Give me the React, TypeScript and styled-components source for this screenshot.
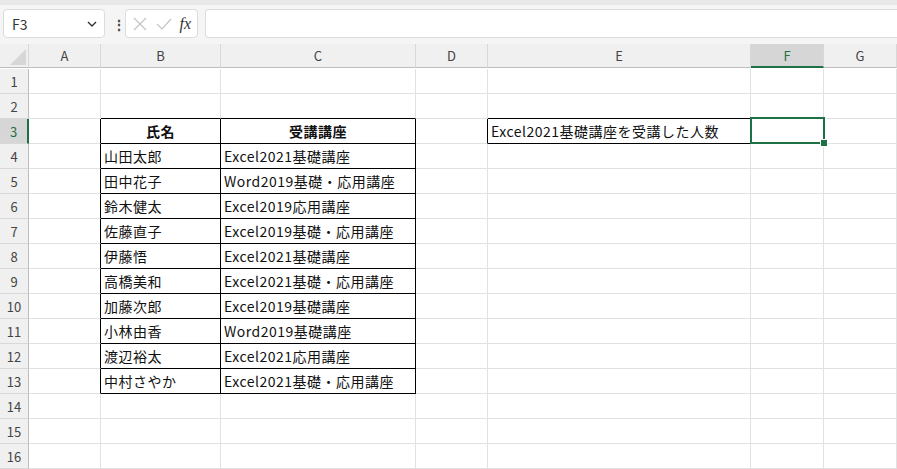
import React from "react";
import styled, { createGlobalStyle } from "styled-components";

const Global = createGlobalStyle`
  body { margin: 0; background: #fff; font-family: "Noto Sans CJK JP", "Noto Sans", sans-serif; }
`;

const cols = [29, 72, 120, 195, 72, 263, 73, 73];
const letters = ["A", "B", "C", "D", "E", "F", "G"];
const data: string[][] = [
  ["氏名", "受講講座"],
  ["山田太郎", "Excel2021基礎講座"],
  ["田中花子", "Word2019基礎・応用講座"],
  ["鈴木健太", "Excel2019応用講座"],
  ["佐藤直子", "Excel2019基礎・応用講座"],
  ["伊藤悟", "Excel2021基礎講座"],
  ["高橋美和", "Excel2021基礎・応用講座"],
  ["加藤次郎", "Excel2019基礎講座"],
  ["小林由香", "Word2019基礎講座"],
  ["渡辺裕太", "Excel2021応用講座"],
  ["中村さやか", "Excel2021基礎・応用講座"],
];

const Bar = styled.div`
  height: 44px;
  background: #f5f5f5;
  border-top: 5px solid #e9e9e9;
  box-sizing: border-box;
  display: flex;
  align-items: center;
  gap: 7px;
  padding: 0 0 2px 3px;
`;
const NameBox = styled.div`
  width: 102px;
  height: 29px;
  box-sizing: border-box;
  background: #fff;
  border: 1px solid #dcdcdc;
  border-radius: 4px;
  display: flex;
  align-items: center;
  justify-content: space-between;
  padding: 0 6px 0 8px;
  font-size: 14px;
  color: #333;
`;
const Dots = styled.div`
  color: #444;
  font-size: 14px;
  font-weight: bold;
  width: 6px;
  text-align: center;
`;
const FxBox = styled(NameBox)`
  width: 73px;
  padding: 0 6px;
`;
const Formula = styled(NameBox)`
  flex: 1;
  border-right: none;
  border-radius: 4px 0 0 4px;
`;
const Grid = styled.div`
  position: relative;
  display: grid;
  grid-template-columns: ${cols.map((c) => c + "px").join(" ")};
  grid-auto-rows: 25px;
  font-size: 14px;
  color: #111;
`;
const ColHead = styled.div<{ $sel?: boolean }>`
  height: 24px;
  background: ${(p) => (p.$sel ? "#d6d6d6" : "#f0f0f0")};
  border-right: 1px solid #d8d8d8;
  border-bottom: ${(p) => (p.$sel ? "2px solid #1e7145" : "1px solid #bdbdbd")};
  box-sizing: border-box;
  display: flex;
  align-items: center;
  justify-content: center;
  font-size: 13px;
  color: ${(p) => (p.$sel ? "#1e7145" : "#444")};
`;
const Corner = styled(ColHead)`
  position: relative;
  &::after {
    content: "";
    position: absolute;
    right: 2px;
    bottom: 2px;
    border-left: 16px solid transparent;
    border-bottom: 16px solid #d7d7d7;
  }
`;
const RowHead = styled.div<{ $sel?: boolean }>`
  background: ${(p) => (p.$sel ? "#d6d6d6" : "#f0f0f0")};
  border-right: ${(p) => (p.$sel ? "2px solid #1e7145" : "1px solid #bdbdbd")};
  border-bottom: 1px solid #d8d8d8;
  box-sizing: border-box;
  display: flex;
  align-items: center;
  justify-content: center;
  font-size: 13px;
  color: ${(p) => (p.$sel ? "#1e7145" : "#444")};
`;
const Cell = styled.div<{ $r: boolean; $b: boolean; $center?: boolean; $bold?: boolean }>`
  box-sizing: border-box;
  border-right: 1px solid ${(p) => (p.$r ? "#000" : "#e1e1e1")};
  border-bottom: 1px solid ${(p) => (p.$b ? "#000" : "#e1e1e1")};
  padding: 0 3px;
  display: flex;
  align-items: center;
  justify-content: ${(p) => (p.$center ? "center" : "flex-start")};
  font-weight: ${(p) => (p.$bold ? "bold" : "normal")};
  letter-spacing: 0.5px;
  white-space: nowrap;
  overflow: visible;
`;
const Selection = styled.div`
  position: absolute;
  left: 750px;
  top: 73px;
  width: 75px;
  height: 27px;
  box-sizing: border-box;
  border: 2px solid #1e7145;
  &::after {
    content: "";
    position: absolute;
    right: -5px;
    bottom: -5px;
    width: 6px;
    height: 6px;
    background: #1e7145;
    border: 1px solid #fff;
  }
`;

function boxed(r: number, c: number) {
  if (r >= 3 && r <= 13 && (c === 1 || c === 2)) return true;
  if (r === 3 && c === 4) return true;
  return false;
}

function text(r: number, c: number) {
  if (r >= 3 && r <= 13 && (c === 1 || c === 2)) return data[r - 3][c - 1];
  if (r === 3 && c === 4) return "Excel2021基礎講座を受講した人数";
  return "";
}

export default function App() {
  const rows = Array.from({ length: 16 }, (_, i) => i + 1);
  return (
    <>
      <Global />
      <Bar>
        <NameBox>
          <span>F3</span>
          <svg width="12" height="12" viewBox="0 0 12 12"><path d="M2 4l4 4 4-4" fill="none" stroke="#333" strokeWidth="1.4" /></svg>
        </NameBox>
        <Dots>⋮</Dots>
        <FxBox>
          <svg width="16" height="16" viewBox="0 0 16 16"><path d="M2 2l12 12M14 2L2 14" stroke="#c4c4c4" strokeWidth="1.2" /></svg>
          <svg width="18" height="16" viewBox="0 0 18 16"><path d="M2 8l5 5L16 3" fill="none" stroke="#c4c4c4" strokeWidth="1.2" /></svg>
          <span style={{ fontFamily: "'Liberation Serif', serif", fontStyle: "italic", fontSize: 16, color: "#333" }}>fx</span>
        </FxBox>
        <Formula />
      </Bar>
      <Grid>
        <Corner />
        {letters.map((l) => (
          <ColHead key={l} $sel={l === "F"}>{l}</ColHead>
        ))}
        {rows.map((r) => (
          <React.Fragment key={r}>
            <RowHead $sel={r === 3}>{r}</RowHead>
            {letters.map((_, c) => (
              <Cell
                key={c}
                $r={boxed(r, c) || boxed(r, c + 1)}
                $b={boxed(r, c) || boxed(r + 1, c)}
                $center={r === 3 && c < 3}
                $bold={r === 3 && c < 3}
              >
                {text(r, c)}
              </Cell>
            ))}
          </React.Fragment>
        ))}
        <Selection />
      </Grid>
    </>
  );
}
